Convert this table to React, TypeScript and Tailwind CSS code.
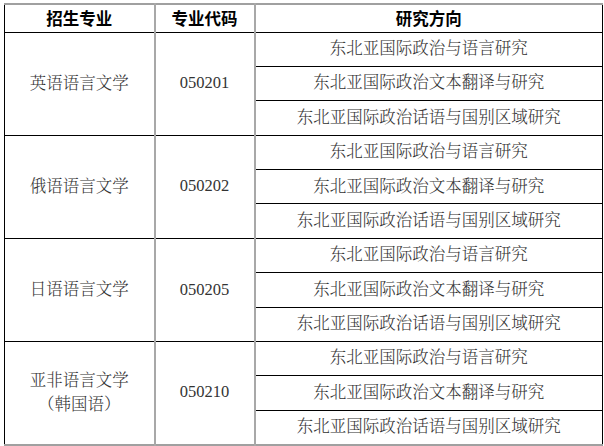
const groups = [
  { name: ['英语语言文学'], code: '050201' },
  { name: ['俄语语言文学'], code: '050202' },
  { name: ['日语语言文学'], code: '050205' },
  { name: ['亚非语言文学', '（韩国语）'], code: '050210' },
];

const directions = ['东北亚国际政治与语言研究', '东北亚国际政治文本翻译与研究', '东北亚国际政治话语与国别区域研究'];

const bodyFont = { fontFamily: '"Liberation Serif", "Noto Serif CJK SC", "Noto Sans CJK SC", serif' };

export default function App() {
  return (
    <div className="w-[604px] h-[446px] bg-white pt-[3px] pl-[4px]">
      <table
        className="w-[599px] table-fixed border-collapse border-t-2 border-b-2 border-t-[#a0a0a0] border-b-[#a0a0a0] border-l border-r border-l-black border-r-black text-[16.5px] text-[#333333] font-light"
        style={bodyFont}
      >
        <colgroup>
          <col className="w-[150px]" />
          <col className="w-[100px]" />
          <col />
        </colgroup>
        <thead>
          <tr className="h-[28px] border-b border-b-black">
            {['招生专业', '专业代码', '研究方向'].map((h, i) => (
              <th
                key={h}
                className={`p-0 text-center font-bold text-black leading-none ${i < 2 ? 'border-r-2 border-r-[#a8a8a8]' : ''}`}
                style={{ fontFamily: '"Noto Sans CJK SC", sans-serif' }}
              >
                {h}
              </th>
            ))}
          </tr>
        </thead>
        <tbody>
          {groups.map((g, gi) =>
            directions.map((d, di) => (
              <tr key={`${gi}-${di}`} className="h-[34.4px] border-b border-b-black">
                {di === 0 && (
                  <>
                    <td rowSpan={3} className="p-0 text-center align-middle border-r-2 border-r-[#a8a8a8] leading-[24px]">
                      {g.name.map((n) => (
                        <div key={n}>{n}</div>
                      ))}
                    </td>
                    <td
                      rowSpan={3}
                      className="p-0 text-center align-middle border-r-2 border-r-[#a8a8a8] font-normal"
                      style={{ fontFamily: '"Liberation Serif", serif' }}
                    >
                      {g.code}
                    </td>
                  </>
                )}
                <td className="p-0 text-center align-middle leading-none">{d}</td>
              </tr>
            ))
          )}
        </tbody>
      </table>
    </div>
  );
}
